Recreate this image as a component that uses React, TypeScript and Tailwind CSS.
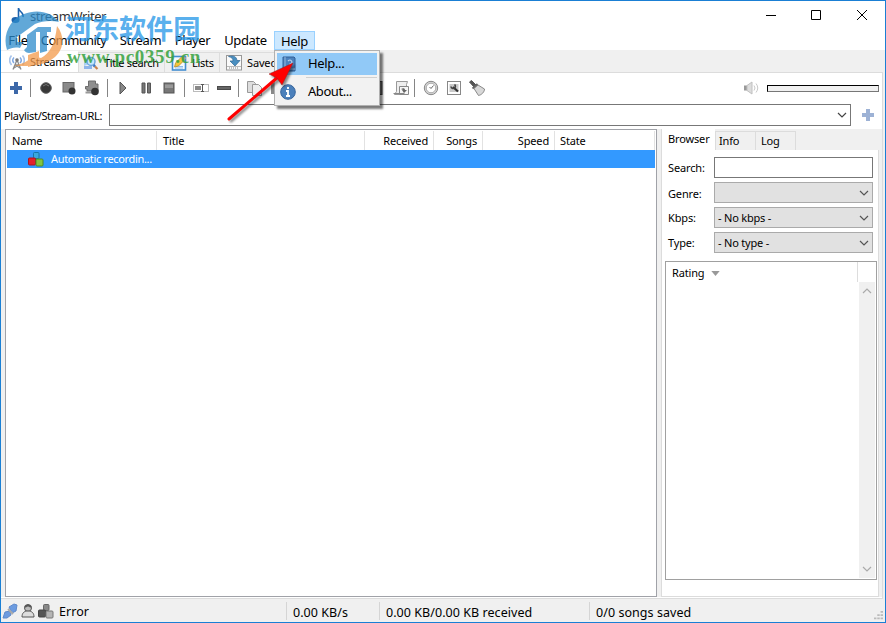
import type { ReactNode } from "react";
import { clsx } from "clsx";

const menus = [
  { label: "File", width: "w-[32px]" },
  { label: "Community", width: "w-[79px]" },
  { label: "Stream", width: "w-[55px]" },
  { label: "Player", width: "w-[49px]" },
  { label: "Update", width: "w-[57px]" },
  { label: "Help", width: "w-[41px]", open: true },
];

const columns = [
  { label: "Name", className: "w-[150px] pl-[5px]" },
  { label: "Title", className: "w-[208px] pl-[6px]" },
  { label: "Received", className: "w-[69px] pr-[5px] text-right" },
  { label: "Songs", className: "w-[49px] pr-[5px] text-right" },
  { label: "Speed", className: "w-[72px] pr-[5px] text-right" },
  { label: "State", className: "w-[100px] pl-[5px]" },
];

const filters = [
  { label: "Genre:", value: "" },
  { label: "Kbps:", value: "- No kbps -" },
  { label: "Type:", value: "- No type -" },
];

function Icon({ children, className }: { children: ReactNode; className?: string }) {
  return (
    <svg viewBox="0 0 16 16" className={clsx("h-4 w-4 shrink-0", className)} fill="none">
      {children}
    </svg>
  );
}

function Chevron({ className }: { className?: string }) {
  return (
    <svg viewBox="0 0 10 6" className={clsx("h-[6px] w-[10px] shrink-0", className)} fill="none">
      <path d="M1 1l4 4 4-4" stroke="currentColor" strokeWidth="1.2" />
    </svg>
  );
}

function Plus({ className }: { className?: string }) {
  return (
    <Icon className={className}>
      <path d="M6 2h4v4h4v4h-4v4H6v-4H2V6h4z" fill="currentColor" />
    </Icon>
  );
}

function Divider({ className }: { className?: string }) {
  return <div className={clsx("h-[18px] w-px shrink-0 bg-[#858585]", className)} />;
}

function AntennaIcon() {
  return (
    <Icon>
      <path d="M4 15.500L8 6l4 9.500M6 11h4M5 14l4.500-3M11 14l-4.500-3" stroke="#8a8a8a" strokeWidth="1.3" />
      <circle cx="8" cy="6" r="1.800" fill="#777" />
      <path d="M5 3.500a4 4 0 0 0 0 5.500M11 3.500a4 4 0 0 1 0 5.500" stroke="#7fa8e2" strokeWidth="1.5" />
      <path d="M2.500 1.500a7 7 0 0 0 0 9.500M13.500 1.500a7 7 0 0 1 0 9.500" stroke="#a9c4ea" strokeWidth="1.700" />
    </Icon>
  );
}

function SearchIcon() {
  return (
    <Icon>
      <path d="M1 3l5-1v7l-5 2z" fill="#a9d1f2" />
      <path d="M1 11h8v3H1z" fill="#8fb5ea" />
      <circle cx="8" cy="6.500" r="4" fill="#c4e6fc" stroke="#6ba6dc" strokeWidth="1.5" />
      <path d="M10.500 10l1.500 1.500" stroke="#3d78c4" strokeWidth="2.500" />
      <path d="M12 11.500l2.500 2.500" stroke="#c7834c" strokeWidth="2.200" />
    </Icon>
  );
}

function ListsIcon() {
  return (
    <Icon>
      <rect x="1.500" y="1.500" width="13" height="13.500" fill="#f4faff" stroke="#438ed1" strokeWidth="1.6" />
      <path d="M4 11.500h8M4 13h8" stroke="#8dbdeb" />
      <path d="M3.500 12l1-4 6-6 3 3-6 6z" fill="#f5c63b" stroke="#b98d2d" strokeWidth=".8" />
      <path d="M10.500 2.500L12.500 1 15 3l-1.500 2z" fill="#e9a38f" />
    </Icon>
  );
}

function SavedIcon() {
  return (
    <Icon>
      <rect x=".5" y=".5" width="15" height="14.500" fill="#fafafa" stroke="#999" />
      <path d="M1 11.500h14" stroke="#bbb" />
      <path d="M3 13h10" stroke="#888" strokeDasharray="1 1" />
      <path d="M2.500 1.500c5-1.500 8 0 8.500 4h3L9 11 4 6h3c0-2.500-1-3.500-4.500-4.500z" fill="#4a8fc0" stroke="#2f6795" strokeWidth=".7" />
    </Icon>
  );
}

function BlocksIcon({ gray }: { gray?: boolean }) {
  return (
    <Icon>
      <rect x="5.500" y="1.500" width="5.500" height="6" rx="1" fill={gray ? "#888" : "#39a8df"} stroke={gray ? "#666" : "#1776aa"} />
      <rect x=".500" y="7" width="7" height="7" rx="1" fill={gray ? "#555" : "#e3202d"} stroke={gray ? "#444" : "#ab1420"} />
      <rect x="8" y="8" width="7" height="7" rx="1" fill={gray ? "#b5b5b5" : "#83c442"} stroke={gray ? "#777" : "#4b8c25"} />
    </Icon>
  );
}

function Tab({ icon, label, className }: { icon: ReactNode; label: string; className: string }) {
  return (
    <div className={clsx("flex shrink-0 items-center overflow-hidden whitespace-nowrap", className)}>
      {icon}
      <span className="ml-[5px]">{label}</span>
    </div>
  );
}

function Toolbar() {
  return (
    <div className="flex h-[31px] shrink-0 items-center pb-[2px] pl-[5px] pr-[3px]">
      <Plus className="ml-[2px] text-[#3d68a8]" />
      <Divider className="ml-[6px]" />
      <Icon className="ml-[7px]">
        <circle cx="8" cy="8" r="5.300" fill="#383838" stroke="#5c5c5c" />
        <path d="M5 6q3-3 6 0" stroke="#777" />
      </Icon>
      <Icon className="ml-[7px]">
        <rect x="2" y="2.500" width="11" height="9.500" fill="#8a8a8a" stroke="#666" />
        <circle cx="11" cy="11" r="3.500" fill="#333" />
      </Icon>
      <Icon className="ml-[7px]">
        <path d="M4.500 1h7v3h2.500v7H3V9H1.500V6.500h3z" fill="#8f8f8f" stroke="#6d6d6d" />
        <path d="M1.500 11.500h8v2h-8z" fill="#999" />
        <circle cx="11" cy="11.500" r="3.800" fill="#333" />
      </Icon>
      <Divider className="ml-[7px]" />
      <Icon className="ml-[7px]">
        <path d="M5 2l6 6-6 6z" fill="#888" stroke="#555" />
      </Icon>
      <Icon className="ml-[7px]">
        <path d="M4 3h3v10H4zM9.500 3h3v10h-3z" fill="#777" stroke="#555" />
      </Icon>
      <Icon className="ml-[7px]">
        <rect x="3" y="3" width="10" height="10" fill="#777" stroke="#555" />
        <path d="M4 4.500h8V8H4z" fill="#999" />
      </Icon>
      <Divider className="ml-[7px]" />
      <Icon className="ml-[8px]">
        <rect x=".5" y="4.500" width="15" height="7" fill="#fff" stroke="#bbb" />
        <path d="M2 6h6v4H2z" fill="#888" />
        <path d="M9.500 4.500v7M8 4.500h3M8 11.500h3" stroke="#555" />
      </Icon>
      <Icon className="ml-[7px]">
        <rect x="1.500" y="6.500" width="13" height="3" fill="#666" stroke="#4a4a4a" />
      </Icon>
      <Divider className="ml-[6px]" />
      <Icon className="ml-[7px]">
        <path d="M1.500 1.500h6l2 2v9h-8z" fill="#ddd" stroke="#999" />
        <path d="M6.500 4.500h6l3 3v8h-9z" fill="#eee" stroke="#999" />
      </Icon>
      <Icon className="ml-[7px]">
        <path d="M2 3h12v11H2z" fill="#888" />
      </Icon>
      <Icon className="ml-[82px]">
        <rect x="2" y="1.500" width="13" height="13" fill="#777" stroke="#444" />
      </Icon>
      <Icon className="ml-[10px]">
        <path d="M3.500 1.500h11l-1 3v10h-12l2-3z" fill="#eee" stroke="#999" />
        <path d="M.500 13.500h11M6.500 6.500h9v8h-9z" fill="#f6f6f6" stroke="#888" />
        <path d="M8 9c2-1.500 4-1 4 1h2l-3 3-2-3h1" fill="#666" />
      </Icon>
      <Divider className="ml-[5px]" />
      <Icon className="ml-[8px]">
        <circle cx="8" cy="8" r="6.700" fill="#d5d5d5" stroke="#888" />
        <circle cx="8" cy="8" r="4.800" fill="#fff" stroke="#aaa" />
        <path d="M10.500 5.500L8 8.500 6.500 7" stroke="#666" />
      </Icon>
      <Icon className="ml-[7px]">
        <rect x="1.500" y="1.500" width="13" height="13" fill="#fff" stroke="#888" />
        <path d="M3.500 4h9v8h-9z" fill="#c9c9c9" />
        <path d="M7 7l5 4.500" stroke="#333" strokeWidth="2.200" />
        <path d="M8.500 4.500a2.200 2.200 0 1 1-3.500 2" stroke="#444" strokeWidth="1.600" />
      </Icon>
      <Icon className="ml-[7px]">
        <path d="M.500 2l2-1.500L7 5 5 7z" fill="#555" stroke="#555" />
        <path d="M5 8.500l4-3.500 6.500 4c0 3-3 6-6 6.500z" fill="#d8d8d8" stroke="#888" />
        <path d="M3.500 8.500l5-4.500" stroke="#666" strokeWidth="1.800" />
      </Icon>
      <Icon className="ml-auto">
        <path d="M1 5.500h3v5H1z" fill="#999" />
        <path d="M4 5.500l5-3.500v12l-5-3.500z" fill="#ddd" stroke="#c0c0c0" />
        <path d="M11 5.500q2 2.500 0 5M13 3.500q3.500 4.500 0 9" stroke="#c8c8c8" />
      </Icon>
      <div className="ml-[8px] mt-px h-[7px] w-[112px] shrink-0 border border-b-[#777] border-l-black border-r-[#777] border-t-black bg-[#f0f0f0]" />
    </div>
  );
}

function StreamTable() {
  return (
    <div className="flex w-[652px] shrink-0 flex-col border border-[#a0a2a8] bg-white p-px">
      <div className="flex h-[19px] shrink-0 items-center">
        {columns.map((column) => (
          <div
            key={column.label}
            className={clsx("h-[19px] shrink-0 border-r border-[#e2e2e2] leading-[20px]", column.className)}
          >
            {column.label}
          </div>
        ))}
      </div>
      <div className="flex h-[18px] shrink-0 items-center bg-[#3399ff] pl-[21px] text-white">
        <BlocksIcon />
        <span className="ml-[7px] tracking-[-0.340px]">Automatic recordin...</span>
      </div>
    </div>
  );
}

function BrowserPanel() {
  return (
    <div className="ml-[4px] flex w-[218px] shrink-0 flex-col">
      <div className="flex h-[21px] shrink-0 bg-[#f0f0f0]">
        <div className="w-[54px] border-l border-[#dcdcdc] bg-white pl-[6px] leading-[20px]">Browser</div>
        <div className="mt-[2px] w-[41px] border-x border-t border-[#dcdcdc] pl-[3px] leading-[18px]">Info</div>
        <div className="mt-[2px] w-[40px] border-r border-t border-[#dcdcdc] pl-[5px] leading-[18px]">Log</div>
      </div>
      <div className="flex flex-1 flex-col border border-t-0 border-[#dcdcdc] pl-[3px]">
        <div className="mt-[7px] flex h-[21px] items-center">
          <span className="w-[49px] pl-[3px]">Search:</span>
          <div className="h-[21px] w-[159px] border border-[#777]" />
        </div>
        {filters.map((filter) => (
          <div key={filter.label} className="mt-[4px] flex h-[21px] items-center">
            <span className={clsx("w-[49px] pl-[3px]", filter.label === "Genre:" && "pt-[3px]")}>{filter.label}</span>
            <div className="flex h-[21px] w-[159px] items-center justify-between border border-[#aaa] bg-[#e1e1e1] pl-[3px] pr-[3px]">
              <span className="tracking-[-0.200px]">{filter.value}</span>
              <Chevron className="text-[#555]" />
            </div>
          </div>
        ))}
        <div className="mt-[8px] flex h-[319px] w-[212px] border border-[#a0a0a0]">
          <div className="flex h-[22px] flex-1 items-center pl-[6px]">
            Rating
            <svg viewBox="0 0 10 6" className="ml-[6px] h-[5px] w-[9px]">
              <path d="M0 0h10L5 6z" fill="#999" />
            </svg>
          </div>
          <div className="mr-px flex w-[18px] flex-col">
            <div className="h-[20px] border-l border-[#ddd]" />
            <div className="mb-px ml-[2px] flex flex-1 flex-col items-center justify-between bg-[#f0f0f0] py-[6px]">
              <Chevron className="rotate-180 text-[#aaa]" />
              <Chevron className="text-[#aaa]" />
            </div>
          </div>
        </div>
      </div>
    </div>
  );
}

function HelpMenu() {
  return (
    <div className="absolute left-[273px] top-[49px] h-[56px] w-[106px] border border-[#b0b0b0] bg-[#f2f2f2] p-[2px] text-[13px] shadow-[3px_3px_2px_#00000085]">
      <div className="flex h-[22px] items-center bg-[#91c9f7] pl-[4px]">
        <Icon>
          <path d="M2 1h11l1 1v13H3l-1-1z" fill="#4c82bd" stroke="#315f96" />
          <path d="M4 1v12h10" stroke="#93b7dd" />
          <path d="M7 5q2-2 3.500 0T9 8v1M9 10.500V12" stroke="#b9d3ee" strokeWidth="1.200" />
        </Icon>
        <span className="mb-[2px] ml-[11px] tracking-[-0.350px]">Help...</span>
      </div>
      <div className="ml-[29px] mt-[2px] h-px bg-[#d0d0d0]" />
      <div className="mt-[2px] flex h-[24px] items-center pl-[3px]">
        <Icon>
          <circle cx="8" cy="8" r="7.300" fill="#4b80bb" stroke="#37659c" />
          <path d="M8 3v2M6 7h2v5M6 12h4" stroke="#fff" strokeWidth="1.800" />
        </Icon>
        <span className="mb-[2px] ml-[12px] tracking-[-0.450px]">About...</span>
      </div>
    </div>
  );
}

function Watermark() {
  return (
    <div className="pointer-events-none absolute -left-px -top-px h-[76px] w-[210px]">
      <svg viewBox="0 0 76 76" className="absolute left-0 top-0 h-[76px] w-[76px] opacity-75">
        <path d="M7 50C2 35 10 19 24 14c12-5 27-3 35 8-8-2-17-1-24 2L17 37v5h6l-3 6c-5-1-9 0-13 2z" fill="#2d8ccb" />
        <path d="M27 35l11-8h13v5h-4v19l-7 2V32h-4v20l-7 1c-2 0-4-1-5-3l3-3z" fill="#2d8ccb" />
        <path d="M57 26c8 10 7 23-2 31-7 6-17 9-29 9H14c8-2 15-5 19-10l8 2c9-5 14-14 16-32z" fill="#f39a4a" />
        <path d="M28 55l11-4v13l-11 3z" fill="#f39a4a" />
      </svg>
      <span className="absolute left-[65px] top-[7px] whitespace-nowrap font-['Noto_Sans_CJK_SC',sans-serif] text-[27.200px] font-bold leading-[40px] text-[#2d9ae8]/80">
        河东软件园
      </span>
      <span className="absolute left-[67px] top-[46px] whitespace-nowrap font-['Liberation_Serif',serif] text-[19px] font-bold leading-[22px] tracking-[0.650px] text-[#35a13d]/85">
        www.pc0359.cn
      </span>
    </div>
  );
}

export default function App() {
  return (
    <div className="relative flex h-[623px] w-[886px] flex-col overflow-hidden border border-[#1a7fd4] bg-[#f0f0f0] font-['Noto_Sans',sans-serif] text-[11px] leading-[14px] tracking-[-0.150px] text-black">
      <header className="flex h-[30px] shrink-0 items-center bg-white pl-[8px] text-[13px]">
        <Icon>
          <ellipse cx="6.500" cy="12" rx="4" ry="3" fill="#1d62ad" />
          <path d="M9.500 12V0c0 4 6 4 4.500 9" stroke="#1d62ad" strokeWidth="1.600" />
        </Icon>
        <span className="ml-[5px] tracking-[-0.400px] text-[#333]">streamWriter</span>
        <svg viewBox="0 0 104 12" className="ml-auto mr-[16px] mt-[-2px] h-[12px] w-[104px]" fill="none" stroke="#000">
          <path d="M1 6.500h10M46.500 1.500h9v9h-9zM92 1l10 10M102 1L92 11" />
        </svg>
      </header>

      <nav className="flex h-[19px] shrink-0 bg-white pl-px text-[13px]">
        {menus.map((menu) => (
          <div
            key={menu.label}
            className={clsx(
              "shrink-0 whitespace-nowrap text-center leading-[19px]",
              menu.width,
              menu.label === "Community" ? "tracking-[-0.650px]" : "tracking-[-0.350px]",
              menu.open && "border border-[#99d1ff] bg-[#cce8ff] leading-[16px]"
            )}
          >
            {menu.label}
          </div>
        ))}
      </nav>

      <div className="flex h-[22px] shrink-0 items-end">
        <Tab icon={<AntennaIcon />} label="Streams" className="h-[21px] w-[77px] bg-white pl-[8px] tracking-[-0.300px]" />
        <Tab icon={<SearchIcon />} label="Title search" className="h-[20px] w-[87px] border border-b-0 border-[#ddd] pl-[4px] tracking-[-0.350px]" />
        <Tab icon={<ListsIcon />} label="Lists" className="h-[20px] w-[55px] border-r border-t border-[#ddd] pl-[6px] tracking-[-0.300px]" />
        <Tab icon={<SavedIcon />} label="Saved songs" className="h-[20px] w-[91px] border-r border-t border-[#ddd] pl-[6px]" />
      </div>

      <main className="mr-[2px] flex h-[527px] shrink-0 flex-col border-b border-r border-t border-[#dcdcdc] bg-white">
        <Toolbar />
        <div className="flex h-[22px] shrink-0 items-center pl-[3px]">
          <span className="w-[105px] shrink-0 whitespace-nowrap pt-[2px] tracking-[-0.320px]">Playlist/Stream-URL:</span>
          <div className="flex h-[22px] w-[742px] shrink-0 items-center justify-end border border-[#777] pr-[3px]">
            <Chevron className="text-[#444]" />
          </div>
          <Plus className="ml-[9px] text-[#9db2d5]" />
        </div>
        <div className="mt-[3px] flex h-[468px] shrink-0 bg-[#f0f0f0] pl-[4px]">
          <StreamTable />
          <div className="flex bg-gradient-to-r from-[#f0f0f0] from-[4px] to-white to-[4px]">
            <BrowserPanel />
          </div>
        </div>
      </main>

      <footer className="flex h-[23px] shrink-0 items-center pl-px text-[12.500px] tracking-[0.050px]">
        <Icon>
          <path d="M1 15l2-6 5-1 1 4-4 3zM7 4l5-3 3 1-1 6-4 2z" fill="#6c9be0" stroke="#5f8acb" />
          <path d="M6 6l5 5" stroke="#aaa" strokeWidth="2" />
        </Icon>
        <Icon className="ml-[2px]">
          <circle cx="8" cy="5" r="3.500" fill="#bbb" stroke="#555" />
          <path d="M2 14c0-4 2-6 6-6s6 2 6 6z" fill="#ddd" stroke="#555" />
          <path d="M5 4q3-3 6 0" stroke="#555" strokeWidth="2" />
        </Icon>
        <div className="ml-[2px] flex">
          <BlocksIcon gray />
        </div>
        <span className="ml-[5px] w-[227px] pt-[3px]">Error</span>
        <div className="h-[18px] w-[93px] border-l border-[#d5d5d5] pl-[6px] leading-[22px]">0.00 KB/s</div>
        <div className="h-[18px] w-[210px] border-l border-[#d5d5d5] pl-[6px] leading-[22px]">0.00 KB/0.00 KB received</div>
        <div className="h-[18px] border-l border-[#d5d5d5] pl-[6px] leading-[22px]">0/0 songs saved</div>
        <svg viewBox="0 0 11 11" className="ml-auto mr-[2px] mt-[9px] h-[9px] w-[9px]" fill="#bbb">
          <path d="M8 0h3v2H8zM4 4h3v2H4zM8 4h3v2H8zM0 8h3v2H0zM4 8h3v2H4zM8 8h3v2H8z" />
        </svg>
      </footer>

      <Watermark />
      <HelpMenu />

      <svg viewBox="0 0 70 62" className="pointer-events-none absolute left-[225px] top-[59px] h-[62px] w-[70px] drop-shadow-[2px_2px_1px_#00000070]">
        <path d="M3 59L52 17" stroke="#ff0000" strokeWidth="3" strokeLinecap="round" />
        <path d="M67 3L56 25 51 18 43 14z" fill="#ff0000" stroke="#8f2020" strokeWidth=".500" />
      </svg>
    </div>
  );
}
